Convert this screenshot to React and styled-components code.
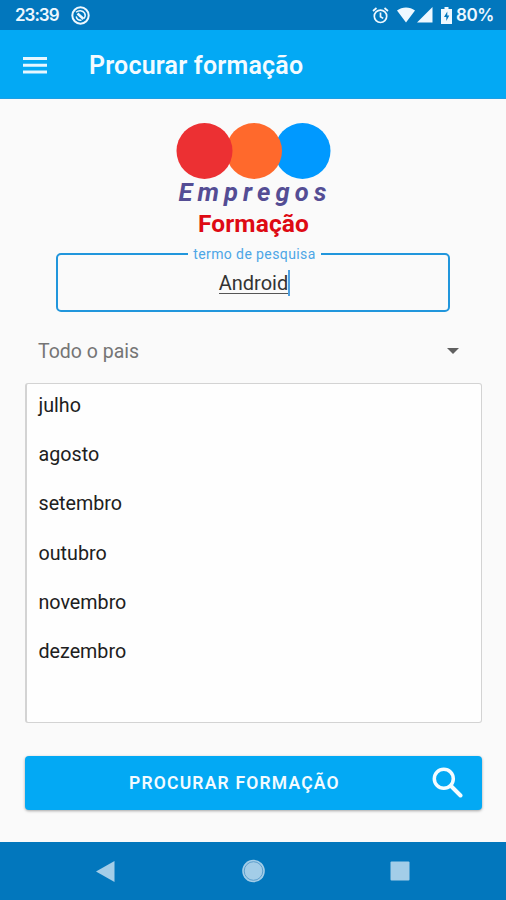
import React from "react";
import styled, { createGlobalStyle } from "styled-components";

const GlobalStyle = createGlobalStyle`
  * { box-sizing: border-box; }
  body { margin: 0; background: #fafafa; font-family: Roboto, sans-serif; }
`;

const Screen = styled.div`
  display: flex;
  flex-direction: column;
  width: 506px;
  height: 900px;
  overflow: hidden;
  background: #fafafa;
`;

const StatusBar = styled.div`
  display: flex;
  flex: none;
  align-items: center;
  justify-content: space-between;
  height: 30px;
  padding: 0 13px 0 15px;
  background: #0277bd;
  color: #eef8ff;
`;

const StatusGroup = styled.div`
  display: flex;
  align-items: center;
`;

const StatusText = styled.span`
  width: ${(p) => p.$width};
  margin-left: ${(p) => p.$gap || 0};
  padding-top: 1px;
  font: 600 17px/29px Inter, sans-serif;
  letter-spacing: ${(p) => p.$spacing};
  white-space: nowrap;
`;

const StatusIcon = styled.svg`
  flex: none;
  display: block;
  margin-left: ${(p) => p.$gap};
`;

const AppBar = styled.header`
  display: flex;
  flex: none;
  align-items: center;
  height: 69px;
  padding: 2px 0 0 23px;
  border-bottom: 1px solid #1d9fe4;
  background: #03a9f4;
`;

const MenuIcon = styled.svg`
  display: block;
  width: 24px;
  height: 17px;
`;

const Title = styled.h1`
  margin: 1px 0 0 42px;
  color: #f3fbff;
  font: 600 25px/34px Roboto, sans-serif;
  letter-spacing: 0.2px;
  white-space: nowrap;
`;

const Content = styled.main`
  display: flex;
  flex: 1;
  flex-direction: column;
  padding: 24px 24px 0 25px;
`;

const Brand = styled.div`
  display: flex;
  flex-direction: column;
  align-items: center;
  height: 130px;
`;

const Circles = styled.svg`
  display: block;
  flex: none;
  width: 156px;
  height: 56px;
`;

const BrandName = styled.div`
  height: 26px;
  margin-left: 3px;
  color: #544d94;
  font: italic 700 25.5px/26px Roboto, sans-serif;
  letter-spacing: 5.1px;
`;

const Section = styled.div`
  margin-top: 2px;
  color: #de0a14;
  font: 700 24.5px/34px Roboto, sans-serif;
  letter-spacing: 0.1px;
`;

const SearchField = styled.fieldset`
  display: flex;
  justify-content: center;
  align-items: flex-start;
  width: 394px;
  height: 66px;
  margin: -7px 0 0 31px;
  padding: 12px 0 0 3px;
  border: 2px solid #2196dc;
  border-radius: 5px;
`;

const FieldLabel = styled.legend`
  height: 16px;
  margin: 0 auto;
  padding: 0 5px;
  color: #4da6e6;
  font: 400 14px/16px Roboto, sans-serif;
  letter-spacing: 0.4px;
`;

const FieldValue = styled.span`
  border-bottom: 1px solid #555;
  color: #333;
  font: 400 20px/19px Roboto, sans-serif;
`;

const Caret = styled.span`
  width: 2px;
  height: 26px;
  margin-top: -4px;
  background: #4d9fdf;
`;

const Select = styled.div`
  display: flex;
  align-items: center;
  justify-content: space-between;
  height: 40px;
  margin-top: 19px;
  padding: 0 23px 0 13px;
  color: #757575;
  font: 400 19.5px/24px Roboto, sans-serif;
`;

const SelectValue = styled.span`
  padding-top: 2px;
`;

const MonthList = styled.ul`
  height: 340px;
  margin: 12px 0 0;
  padding: 0 0 0 11.5px;
  border: 1.5px solid #d3d3d3;
  border-left-width: 2px;
  border-radius: 3px;
  background: #fefefe;
  list-style: none;
`;

const Month = styled.li`
  height: 49.2px;
  color: #202020;
  font: 400 19.7px/44px Roboto, sans-serif;
`;

const SearchButton = styled.button`
  display: flex;
  align-items: center;
  justify-content: space-between;
  width: 457px;
  height: 54px;
  margin-top: 33px;
  padding: 0 19px 0 104px;
  border: 0;
  border-radius: 4px;
  background: #03a9f4;
  box-shadow: 0 1px 3px rgba(0, 0, 0, 0.35);
  color: #f3fbff;
  font: 600 17.5px/24px Roboto, sans-serif;
  letter-spacing: 1.2px;
  white-space: nowrap;
`;

const SearchIcon = styled.svg`
  display: block;
  width: 31px;
  height: 31px;
  margin-bottom: 2px;
`;

const NavBar = styled.nav`
  display: flex;
  flex: none;
  align-items: center;
  justify-content: space-between;
  height: 58px;
  padding: 0 96px;
  background: #0277bd;
`;

const months = ["julho", "agosto", "setembro", "outubro", "novembro", "dezembro"];

export default function App() {
  return (
    <>
      <GlobalStyle />
      <Screen>
        <StatusBar>
          <StatusGroup>
            <StatusText $width="43px" $spacing="-1px">23:39</StatusText>
            <StatusIcon $gap="13px" width="19" height="19" viewBox="0 0 19 19" fill="none" stroke="currentColor">
              <circle cx="9.5" cy="9.5" r="8.2" strokeWidth="2" />
              <path d="M5 6.200C7.500 4 11.800 4 13.600 7.200c.9 1.700.7 3.700-.6 5.200M5.200 10.500c.6 2.500 2.600 4 5.300 3.700" strokeWidth="1.500" />
              <path d="m6.500 7.500 6 5.500" strokeWidth="2.500" />
            </StatusIcon>
          </StatusGroup>
          <StatusGroup>
            <StatusIcon $gap="0" width="17" height="17" viewBox="0 0 17 17" fill="none" stroke="currentColor" strokeWidth="1.7">
              <circle cx="8.500" cy="9.300" r="6.200" />
              <path d="M8.500 5.500v4.200l2.700 1.700M1 4l3.500-3M16 4l-3.500-3" />
            </StatusIcon>
            <StatusIcon $gap="8px" width="18" height="16" viewBox="0 0 19 16" preserveAspectRatio="none" fill="currentColor">
              <path d="M0 3.500C5.500-.5 13.500-.5 19 3.500L9.500 15.500Z" />
            </StatusIcon>
            <StatusIcon $gap="2px" width="16" height="16" viewBox="0 0 16 16" fill="currentColor">
              <path d="M15.500 0v15.500H0Z" />
            </StatusIcon>
            <StatusIcon $gap="8px" width="11" height="17" viewBox="0 0 11 17">
              <path d="M3.500 0h4v2H11v15H0V2h3.500Z" fill="currentColor" />
              <path d="M6.300 4.500 3 10h2.300v4L8.300 8.500h-2Z" fill="#0277bd" />
            </StatusIcon>
            <StatusText $gap="4px" $width="37px" $spacing="-0.4px">80%</StatusText>
          </StatusGroup>
        </StatusBar>

        <AppBar>
          <MenuIcon viewBox="0 0 24 17" fill="#e6f7ff">
            <path d="M0 0h24v3H0zM0 6.700h24v3H0zM0 13.500h24v3H0z" />
          </MenuIcon>
          <Title>Procurar formação</Title>
        </AppBar>

        <Content>
          <Brand>
            <Circles viewBox="0 0 156 56">
              <circle cx="126.500" cy="28" r="28" fill="#0099ff" />
              <circle cx="78" cy="28" r="28" fill="#ff692c" />
              <circle cx="28.500" cy="28" r="28" fill="#ec3033" />
            </Circles>
            <BrandName>Empregos</BrandName>
            <Section>Formação</Section>
          </Brand>

          <SearchField>
            <FieldLabel>termo de pesquisa</FieldLabel>
            <FieldValue>Android</FieldValue>
            <Caret />
          </SearchField>

          <Select>
            <SelectValue>Todo o pais</SelectValue>
            <svg width="12" height="6" viewBox="0 0 12 6">
              <path d="M0 0h12L6 6Z" fill="#606060" />
            </svg>
          </Select>

          <MonthList>
            {months.map((month) => (
              <Month key={month}>{month}</Month>
            ))}
          </MonthList>

          <SearchButton>
            PROCURAR FORMAÇÃO
            <SearchIcon viewBox="0 0 31 31" fill="none" stroke="#f5fcff">
              <circle cx="11.800" cy="11.800" r="9.500" strokeWidth="3.500" />
              <path d="m19 19 9.500 9.500" strokeWidth="4" strokeLinecap="round" />
            </SearchIcon>
          </SearchButton>
        </Content>

        <NavBar>
          <svg width="19" height="21" viewBox="0 0 19 21">
            <path d="M18.500 0v21L0 10.500Z" fill="#a3cde8" />
          </svg>
          <svg width="24" height="24" viewBox="0 0 24 24">
            <circle cx="12.500" cy="12" r="11.300" fill="#a3cde8" />
            <circle cx="12.500" cy="12" r="9.300" fill="none" stroke="#5d9fcd" />
          </svg>
          <svg width="20" height="20" viewBox="0 0 20 20">
            <rect x="0.500" y="0.500" width="19" height="19" rx="1" fill="#a3cde8" />
          </svg>
        </NavBar>
      </Screen>
    </>
  );
}
